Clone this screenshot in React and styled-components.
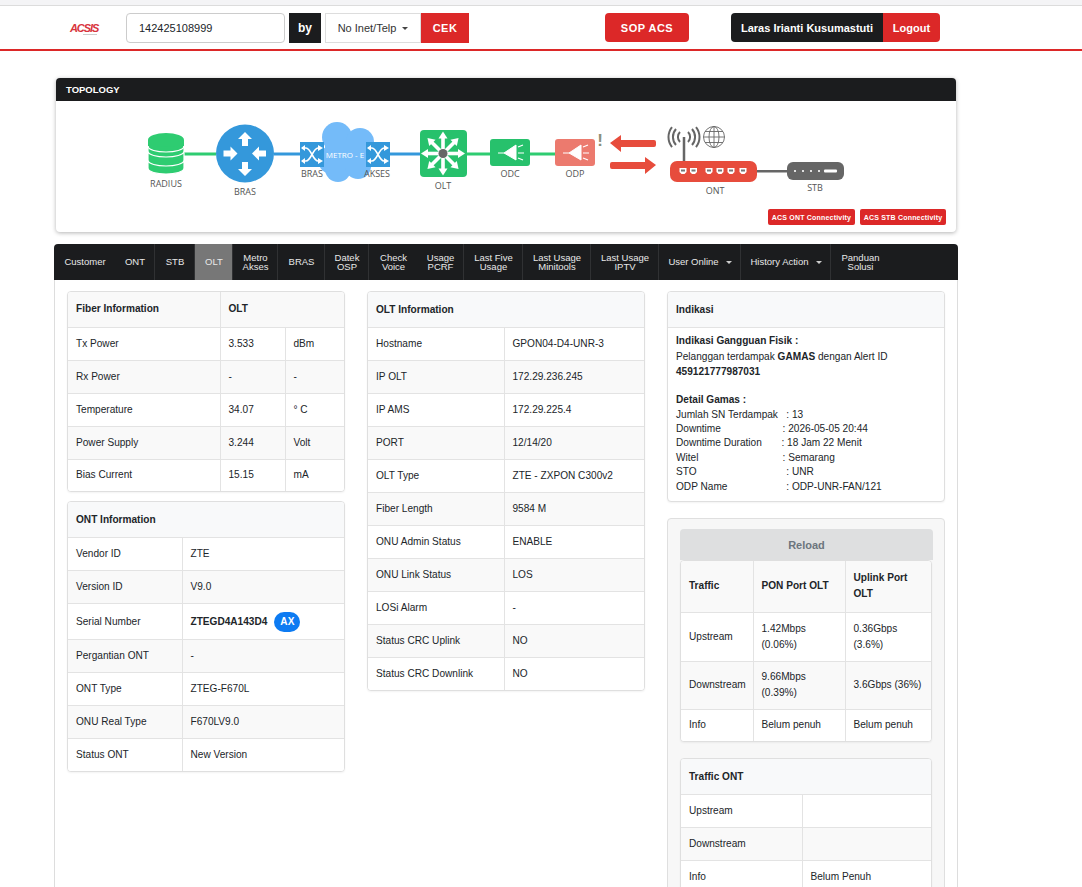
import React from 'react';
import styled, { createGlobalStyle } from 'styled-components';

const GlobalStyle = createGlobalStyle`
    html, body {
        margin: 0;
        padding: 0;
        background: #fff;
    }
    body {
        font-family: "Liberation Sans", Arial, sans-serif;
        font-size: 10.1px;
        color: #212529;
    }
`

const Page = styled.div`
    height: 887px;
    overflow: hidden;
`

const TopStrip = styled.div`
    height: 5px;
    background: #f4f4f6;
    border-bottom: 1px solid #dcdcdc;
`

const Header = styled.header`
    display: flex;
    align-items: center;
    height: 43px;
    padding-left: 70px;
    border-bottom: 2px solid #dc2828;
`

const Logo = styled.div`
    position: relative;
    width: 56px;
    color: #d8343c;
    font-size: 11px;
    font-weight: bold;
    font-style: italic;
    letter-spacing: -1.1px;

    &::after {
        content: '';
        position: absolute;
        left: 13px;
        bottom: -1px;
        width: 14px;
        height: 1px;
        background: #ccc;
    }
`

const SearchInput = styled.div`
    box-sizing: border-box;
    width: 159px;
    height: 30px;
    padding: 0 12px;
    display: flex;
    align-items: center;
    border: 1px solid #ccc;
    border-radius: 4px;
    font-size: 11px;
`

const ByLabel = styled.div`
    box-sizing: border-box;
    width: 32px;
    height: 30px;
    margin: 0 4px;
    display: flex;
    align-items: center;
    justify-content: center;
    background: #1b1c1e;
    color: #fff;
    font-size: 12px;
    font-weight: bold;
`

const SelectBox = styled.div`
    box-sizing: border-box;
    width: 96px;
    height: 30px;
    display: flex;
    align-items: center;
    justify-content: center;
    gap: 6px;
    border: 1px solid #ddd;
    font-size: 11px;
    color: #333;
`

const Caret = styled.span`
    display: inline-block;
    width: 0;
    height: 0;
    margin-top: 1px;
    border-left: 3px solid transparent;
    border-right: 3px solid transparent;
    border-top: 3px solid ${props => props.$color || '#444'};
`

const RedButton = styled.div`
    box-sizing: border-box;
    height: ${props => props.$tall ? '30px' : '29px'};
    width: ${props => props.$width}px;
    margin-left: ${props => props.$left || 0}px;
    display: flex;
    align-items: center;
    justify-content: center;
    background: #dc2828;
    color: #fff;
    font-size: 11px;
    font-weight: bold;
    letter-spacing: ${props => props.$spacing || 0}px;
    border-radius: ${props => props.$radius || '4px'};
`

const UserName = styled.div`
    box-sizing: border-box;
    width: 152px;
    height: 29px;
    margin-left: 42px;
    display: flex;
    align-items: center;
    justify-content: center;
    background: #1b1c1e;
    color: #fff;
    font-size: 11px;
    font-weight: bold;
    border-radius: 4px 0 0 4px;
`

const Content = styled.main`
    width: 904px;
    margin: 27px 0 0 54px;
`

const TopologyCard = styled.section`
    margin: 0 2px 12px;
    background: #fff;
    border-radius: 4px;
    box-shadow: 0 1px 4px rgba(0, 0, 0, 0.3);
    overflow: hidden;
`

const TopologyTitle = styled.div`
    height: 23px;
    padding-left: 10px;
    display: flex;
    align-items: center;
    background: #1b1c1e;
    color: #fff;
    font-size: 9.5px;
    font-weight: bold;
`

const Diagram = styled.svg`
    display: block;
    width: 900px;
    height: 108px;
    font-family: "Open Sans", sans-serif;
    font-size: 9px;
`

const ConnectivityRow = styled.div`
    display: flex;
    justify-content: flex-end;
    gap: 5px;
    padding: 0 10px 7px 0;
`

const ConnectivityButton = styled.div`
    width: ${props => props.$width}px;
    height: 16px;
    display: flex;
    align-items: center;
    justify-content: center;
    background: #dc2828;
    color: #fff;
    font-size: 7px;
    font-weight: bold;
    letter-spacing: 0.2px;
    border-radius: 2px;
`

const TabBar = styled.nav`
    height: 36px;
    display: flex;
    background: #1b1c1e;
    border-radius: 4px 4px 0 0;
`

const Tab = styled.div`
    box-sizing: border-box;
    width: ${props => props.$width}px;
    padding-left: 1px;
    display: flex;
    align-items: center;
    justify-content: center;
    gap: 7px;
    text-align: center;
    font-size: 9.5px;
    line-height: 9.5px;
    color: #e8e8e8;
    background: ${props => props.$active ? '#777' : 'transparent'};
    border-right: ${props => props.$plain ? 'none' : '1px solid #303133'};
`

const Panel = styled.div`
    box-sizing: border-box;
    min-height: 620px;
    padding: 11px 12px;
    display: grid;
    grid-template-columns: repeat(3, 278px);
    column-gap: 22px;
    align-items: start;
    border: 1px solid #ddd;
    border-top: none;
`

const Column = styled.div`
    display: flex;
    flex-direction: column;
    gap: ${props => props.$gap || 9}px;
`

const Card = styled.section`
    background: #fff;
    border: 1px solid #dfdfdf;
    border-radius: 4px;
    box-shadow: 0 1px 2px rgba(0, 0, 0, 0.05);
    overflow: hidden;
`

const CardHeader = styled.div`
    box-sizing: border-box;
    height: 35px;
    padding-left: 8px;
    display: flex;
    align-items: center;
    background: #f8f9fa;
    font-weight: bold;
`

const Table = styled.table`
    width: 100%;
    table-layout: fixed;
    border-collapse: collapse;

    tr:nth-child(odd) td {
        background: ${props => props.$headed ? '#f9f9f9' : '#fff'};
    }

    tr:nth-child(even) td {
        background: ${props => props.$headed ? '#fff' : '#f9f9f9'};
    }

    tr:first-child td {
        border-top: ${props => props.$headed ? 'none' : '1px solid #e3e3e3'};
    }

    tr:last-child {
        height: 32px;
    }

    tr:last-child td {
        border-bottom: none;
    }

    td:first-child {
        border-left: none;
    }

    td:last-child {
        border-right: none;
    }
`

const Row = styled.tr`
    height: ${props => props.$height || 33}px;
`

const Cell = styled.td`
    padding: 0 8px;
    border: 1px solid #e3e3e3;
    line-height: 16px;
`

const HeadCell = styled(Cell)`
    && {
        background: #f8f9fa;
        font-weight: bold;
    }
`

const Badge = styled.span`
    display: inline-block;
    margin-left: 7px;
    padding: 0 6px;
    line-height: 20px;
    background: #0d7bf2;
    color: #fff;
    font-weight: bold;
    border-radius: 10px;
`

const IndicationBody = styled.div`
    padding: 6px 8px 7px;
    border-top: 1px solid #e3e3e3;
    line-height: 14.4px;
    white-space: pre-wrap;
`

const Strong = styled.div`
    font-weight: bold;
    margin-top: ${props => props.$top || 0}px;
    margin-bottom: ${props => props.$bottom || 0}px;
`

const ReloadCard = styled.section`
    padding: 10px 11px 0 12px;
    background: #f7f7f7;
    border: 1px solid #dfdfdf;
    border-radius: 4px;
`

const ReloadButton = styled.div`
    height: 31px;
    display: flex;
    align-items: center;
    justify-content: center;
    background: #dedfe0;
    color: #6c757d;
    font-size: 11px;
    font-weight: bold;
    border-radius: 4px 4px 0 0;
`

const TrafficCard = styled(Card)`
    margin-right: 1px;
`

const OntTrafficCard = styled(Card)`
    margin: 16px 1px 0 0;
`

const tabs = [
    { lines: ['Customer'], width: 61, plain: true },
    { lines: ['ONT'], width: 40 },
    { lines: ['STB'], width: 40 },
    { lines: ['OLT'], width: 38, active: true },
    { lines: ['Metro', 'Akses'], width: 45 },
    { lines: ['BRAS'], width: 47 },
    { lines: ['Datek', 'OSP'], width: 44 },
    { lines: ['Check', 'Voice'], width: 48, plain: true },
    { lines: ['Usage', 'PCRF'], width: 47 },
    { lines: ['Last Five', 'Usage'], width: 59 },
    { lines: ['Last Usage', 'Minitools'], width: 68 },
    { lines: ['Last Usage', 'IPTV'], width: 68 },
    { lines: ['User Online'], width: 82, caret: true },
    { lines: ['History Action'], width: 90, caret: true },
    { lines: ['Panduan', 'Solusi'], width: 58, plain: true }
];

const fiberRows = [
    ['Tx Power', '3.533', 'dBm'],
    ['Rx Power', '-', '-'],
    ['Temperature', '34.07', '° C'],
    ['Power Supply', '3.244', 'Volt'],
    ['Bias Current', '15.15', 'mA']
];

const oltRows = [
    ['Hostname', 'GPON04-D4-UNR-3'],
    ['IP OLT', '172.29.236.245'],
    ['IP AMS', '172.29.225.4'],
    ['PORT', '12/14/20'],
    ['OLT Type', 'ZTE - ZXPON C300v2'],
    ['Fiber Length', '9584 M'],
    ['ONU Admin Status', 'ENABLE'],
    ['ONU Link Status', 'LOS'],
    ['LOSi Alarm', '-'],
    ['Status CRC Uplink', 'NO'],
    ['Status CRC Downlink', 'NO']
];

const gamasRows = [
    ['Jumlah SN Terdampak', 3, '13'],
    ['Downtime', 22, '2026-05-05 20:44'],
    ['Downtime Duration', 7, '18 Jam 22 Menit'],
    ['Witel', 30, 'Semarang'],
    ['STO', 32, 'UNR'],
    ['ODP Name', 21, 'ODP-UNR-FAN/121']
];

// arrow pointing up with its tip on 0,0
const ArrowHead = ( { x, y, angle } ) => (
    <polygon
        transform={`translate(${x} ${y}) rotate(${angle})`}
        points="0,0 7,7 3,7 3,14 -3,14 -3,7 -7,7"
        fill="#fff"
    />
);

const SwitchIcon = ( { x } ) => (
    <g transform={`translate(${x} 142)`}>
        <rect width="24" height="25" fill="#3498db" />
        <g fill="none" stroke="#fff" strokeWidth="1.6">
            <path d="M2 6 H6 C11 6 13 19 18 19 H20" />
            <path d="M2 19 H6 C11 19 13 6 18 6 H20" />
        </g>
        <g fill="#fff">
            <polygon points="23,6 18,3 18,9" />
            <polygon points="23,19 18,16 18,22" />
            <polygon points="1,6 5,3 5,9" />
            <polygon points="1,19 5,16 5,22" />
        </g>
    </g>
);

const SplitterIcon = ( { x, fill } ) => (
    <g transform={`translate(${x} 139)`}>
        <rect width="40" height="27" rx="3" fill={fill} />
        <path d="M8 14 H14 L26 6 V21 L14 14" fill="#fff" stroke="#fff" />
        <g stroke="#fff" strokeWidth="1.2">
            <path d="M28 8 L33 6" />
            <path d="M28 14 H34" />
            <path d="M28 19 L33 21" />
        </g>
    </g>
);

const Port = ( { x } ) => (
    <g transform={`translate(${x} 168)`}>
        <polygon points="0,0 7,0 7,4 5,6 2,6 0,4" fill="#fff" />
        <rect x="1.5" y="1.5" width="4" height="2" fill="#777" />
    </g>
);

const Label = ( { x, y, children } ) => (
    <text x={x} y={y} textAnchor="middle" fill="#555">{children}</text>
);

const TopologyDiagram = () => (
    <Diagram viewBox="0 0 900 108">
        <g transform="translate(-56 -101)">
            <rect x="184" y="152.5" width="32" height="3" fill="#2ecc71" />
            <rect x="274" y="152.5" width="146" height="3" fill="#3498db" />
            <rect x="467" y="152.5" width="88" height="3" fill="#2ecc71" />
            <rect x="757" y="170" width="30" height="2.5" fill="#666" />

            {/* radius database */}
            <g fill="#2ecc71" stroke="#fff" strokeWidth="1.2">
                <path d="M148 162 v6 c0 8 36 8 36 0 v-6 z" />
                <path d="M148 153 v7 c0 8 36 8 36 0 v-7 z" />
                <path d="M148 144 v7 c0 8 36 8 36 0 v-7 z" />
            </g>
            <ellipse cx="166" cy="140" rx="18" ry="7" fill="#2ecc71" />
            <rect x="148" y="140" width="36" height="6" fill="#2ecc71" />
            <path d="M148 146 c0 8 36 8 36 0" fill="none" stroke="#fff" strokeWidth="1.2" />

            {/* bras router */}
            <circle cx="245" cy="153.5" r="29" fill="#3498db" />
            <ArrowHead x={245} y={132} angle={0} />
            <ArrowHead x={245} y={176} angle={180} />
            <ArrowHead x={237.5} y={153.5} angle={90} />
            <ArrowHead x={252} y={153.5} angle={-90} />

            {/* metro cloud */}
            <g fill="#74bbf9">
                <circle cx="337" cy="137" r="15" />
                <circle cx="360" cy="142" r="14" />
                <circle cx="332" cy="160" r="14" />
                <circle cx="370" cy="156" r="10" />
                <circle cx="338" cy="169" r="13" />
                <circle cx="358" cy="166" r="13" />
                <rect x="325" y="140" width="46" height="28" />
            </g>
            <SwitchIcon x={300} />
            <SwitchIcon x={366} />
            <text x="345" y="158" textAnchor="middle" fill="#fff" fontSize="8">METRO - E</text>

            {/* olt */}
            <rect x="420" y="130" width="47" height="47" rx="4" fill="#27c16c" />
            {[0, 45, 90, 135, 180, 225, 270, 315].map( angle => (
                <g key={angle} transform={`translate(443 153.5) rotate(${angle})`}>
                    <rect x="-1.8" y="-16" width="3.6" height="16" fill="#fff" />
                    <polygon points="0,-22 -4.5,-15 4.5,-15" fill="#fff" />
                </g>
            ) )}
            <circle cx="443" cy="153.5" r="4.5" fill="#666" />

            <SplitterIcon x={490} fill="#27c16c" />
            <SplitterIcon x={555} fill="#ec7a6e" />

            <text x="600" y="146" textAnchor="middle" fill="#8c8f7c" fontSize="17" fontWeight="bold"
                  fontFamily="Liberation Sans">!</text>

            {/* signal arrows */}
            <g fill="#e74c3c">
                <path d="M610 143 L621 135 V140 H654 Q656 140 656 142 V145 Q656 147 654 147 H621 V152 Z" />
                <path d="M656 165 L645 157 V162 H612 Q610 162 610 164 V167 Q610 169 612 169 H645 V174 Z" />
            </g>

            {/* ont */}
            <g fill="none" stroke="#666">
                <path d="M684 137 V161" strokeWidth="2.5" />
                <path d="M680 132 a7 7 0 0 0 0 10" strokeWidth="2" />
                <path d="M688 132 a7 7 0 0 1 0 10" strokeWidth="2" />
                <path d="M676 129 a12 12 0 0 0 0 16" strokeWidth="2" />
                <path d="M692 129 a12 12 0 0 1 0 16" strokeWidth="2" />
                <path d="M672 127 a16 16 0 0 0 0 20" strokeWidth="2" />
                <path d="M696 127 a16 16 0 0 1 0 20" strokeWidth="2" />
                <g strokeWidth="0.9">
                    <circle cx="714" cy="137" r="10.5" />
                    <ellipse cx="714" cy="137" rx="5" ry="10.5" />
                    <path d="M714 126.5 V147.5 M703.5 137 H724.5 M705 131.5 H723 M705 142.5 H723" />
                </g>
            </g>
            <rect x="670" y="161" width="87" height="21" rx="7" fill="#e74c3c" />
            {[679.5, 690, 705.5, 716.5, 727.5, 739.5].map( x => <Port key={x} x={x} /> )}

            {/* stb */}
            <rect x="787" y="162" width="57" height="18" rx="6" fill="#666" />
            {[795, 803, 811, 819].map( x => <circle key={x} cx={x} cy="171" r="1.1" fill="#fff" /> )}
            <rect x="824" y="169.5" width="13" height="3" rx="1" fill="#fff" />

            <Label x={166} y={187}>RADIUS</Label>
            <Label x={245} y={195}>BRAS</Label>
            <Label x={312} y={177}>BRAS</Label>
            <Label x={377} y={177}>AKSES</Label>
            <Label x={443} y={189}>OLT</Label>
            <Label x={510} y={177}>ODC</Label>
            <Label x={575} y={177}>ODP</Label>
            <Label x={715} y={194}>ONT</Label>
            <Label x={815} y={191}>STB</Label>
        </g>
    </Diagram>
);

const App = () => {
    return (
        <Page>
            <GlobalStyle />
            <TopStrip />
            <Header>
                <Logo>ACSIS</Logo>
                <SearchInput>142425108999</SearchInput>
                <ByLabel>by</ByLabel>
                <SelectBox>No Inet/Telp <Caret /></SelectBox>
                <RedButton $width={48} $tall $radius="0" $spacing={0.5}>CEK</RedButton>
                <RedButton $width={84} $left={136} $spacing={0.5}>SOP ACS</RedButton>
                <UserName>Laras Irianti Kusumastuti</UserName>
                <RedButton $width={57} $radius="0 4px 4px 0">Logout</RedButton>
            </Header>

            <Content>
                <TopologyCard>
                    <TopologyTitle>TOPOLOGY</TopologyTitle>
                    <TopologyDiagram />
                    <ConnectivityRow>
                        <ConnectivityButton $width={87}>ACS ONT Connectivity</ConnectivityButton>
                        <ConnectivityButton $width={86}>ACS STB Connectivity</ConnectivityButton>
                    </ConnectivityRow>
                </TopologyCard>

                <TabBar>
                    {tabs.map( tab => (
                        <Tab key={tab.lines.join()} $width={tab.width} $active={tab.active} $plain={tab.plain}>
                            <span>
                                {tab.lines[0]}
                                {tab.lines[1] && <br />}
                                {tab.lines[1]}
                            </span>
                            {tab.caret && <Caret $color="#ccc" />}
                        </Tab>
                    ) )}
                </TabBar>

                <Panel>
                    <Column>
                        <Card>
                            <Table $headed>
                                <colgroup>
                                    <col width="152" />
                                    <col width="65" />
                                    <col />
                                </colgroup>
                                <tbody>
                                    <Row $height={35}>
                                        <HeadCell>Fiber Information</HeadCell>
                                        <HeadCell colSpan="2">OLT</HeadCell>
                                    </Row>
                                    {fiberRows.map( ( [label, value, unit] ) => (
                                        <Row key={label}>
                                            <Cell>{label}</Cell>
                                            <Cell>{value}</Cell>
                                            <Cell>{unit}</Cell>
                                        </Row>
                                    ) )}
                                </tbody>
                            </Table>
                        </Card>

                        <Card>
                            <CardHeader>ONT Information</CardHeader>
                            <Table>
                                <colgroup>
                                    <col width="114" />
                                    <col />
                                </colgroup>
                                <tbody>
                                    <Row><Cell>Vendor ID</Cell><Cell>ZTE</Cell></Row>
                                    <Row><Cell>Version ID</Cell><Cell>V9.0</Cell></Row>
                                    <Row $height={36}>
                                        <Cell>Serial Number</Cell>
                                        <Cell><b>ZTEGD4A143D4</b><Badge>AX</Badge></Cell>
                                    </Row>
                                    <Row><Cell>Pergantian ONT</Cell><Cell>-</Cell></Row>
                                    <Row><Cell>ONT Type</Cell><Cell>ZTEG-F670L</Cell></Row>
                                    <Row><Cell>ONU Real Type</Cell><Cell>F670LV9.0</Cell></Row>
                                    <Row><Cell>Status ONT</Cell><Cell>New Version</Cell></Row>
                                </tbody>
                            </Table>
                        </Card>
                    </Column>

                    <Column>
                        <Card>
                            <CardHeader>OLT Information</CardHeader>
                            <Table>
                                <colgroup>
                                    <col width="136" />
                                    <col />
                                </colgroup>
                                <tbody>
                                    {oltRows.map( ( [label, value] ) => (
                                        <Row key={label}>
                                            <Cell>{label}</Cell>
                                            <Cell>{value}</Cell>
                                        </Row>
                                    ) )}
                                </tbody>
                            </Table>
                        </Card>
                    </Column>

                    <Column $gap={16}>
                        <Card>
                            <CardHeader>Indikasi</CardHeader>
                            <IndicationBody>
                                <Strong $bottom={2}>Indikasi Gangguan Fisik :</Strong>
                                <div>Pelanggan terdampak <b>GAMAS</b> dengan Alert ID</div>
                                <Strong>459121777987031</Strong>
                                <Strong $top={14}>Detail Gamas :</Strong>
                                {gamasRows.map( ( [label, pad, value] ) => (
                                    <div key={label}>{label}{' '.repeat( pad )}: {value}</div>
                                ) )}
                            </IndicationBody>
                        </Card>

                        <ReloadCard>
                            <ReloadButton>Reload</ReloadButton>
                            <TrafficCard>
                                <Table $headed>
                                    <colgroup>
                                        <col width="72" />
                                        <col width="92" />
                                        <col />
                                    </colgroup>
                                    <tbody>
                                        <Row $height={51}>
                                            <HeadCell>Traffic</HeadCell>
                                            <HeadCell>PON Port OLT</HeadCell>
                                            <HeadCell>Uplink Port OLT</HeadCell>
                                        </Row>
                                        <Row $height={49}>
                                            <Cell>Upstream</Cell>
                                            <Cell>1.42Mbps (0.06%)</Cell>
                                            <Cell>0.36Gbps (3.6%)</Cell>
                                        </Row>
                                        <Row $height={48}>
                                            <Cell>Downstream</Cell>
                                            <Cell>9.66Mbps (0.39%)</Cell>
                                            <Cell>3.6Gbps (36%)</Cell>
                                        </Row>
                                        <Row>
                                            <Cell>Info</Cell>
                                            <Cell>Belum penuh</Cell>
                                            <Cell>Belum penuh</Cell>
                                        </Row>
                                    </tbody>
                                </Table>
                            </TrafficCard>

                            <OntTrafficCard>
                                <CardHeader>Traffic ONT</CardHeader>
                                <Table>
                                    <colgroup>
                                        <col width="121" />
                                        <col />
                                    </colgroup>
                                    <tbody>
                                        <Row><Cell>Upstream</Cell><Cell /></Row>
                                        <Row><Cell>Downstream</Cell><Cell /></Row>
                                        <Row><Cell>Info</Cell><Cell>Belum Penuh</Cell></Row>
                                    </tbody>
                                </Table>
                            </OntTrafficCard>
                        </ReloadCard>
                    </Column>
                </Panel>
            </Content>
        </Page>
    );
};

export default App;
